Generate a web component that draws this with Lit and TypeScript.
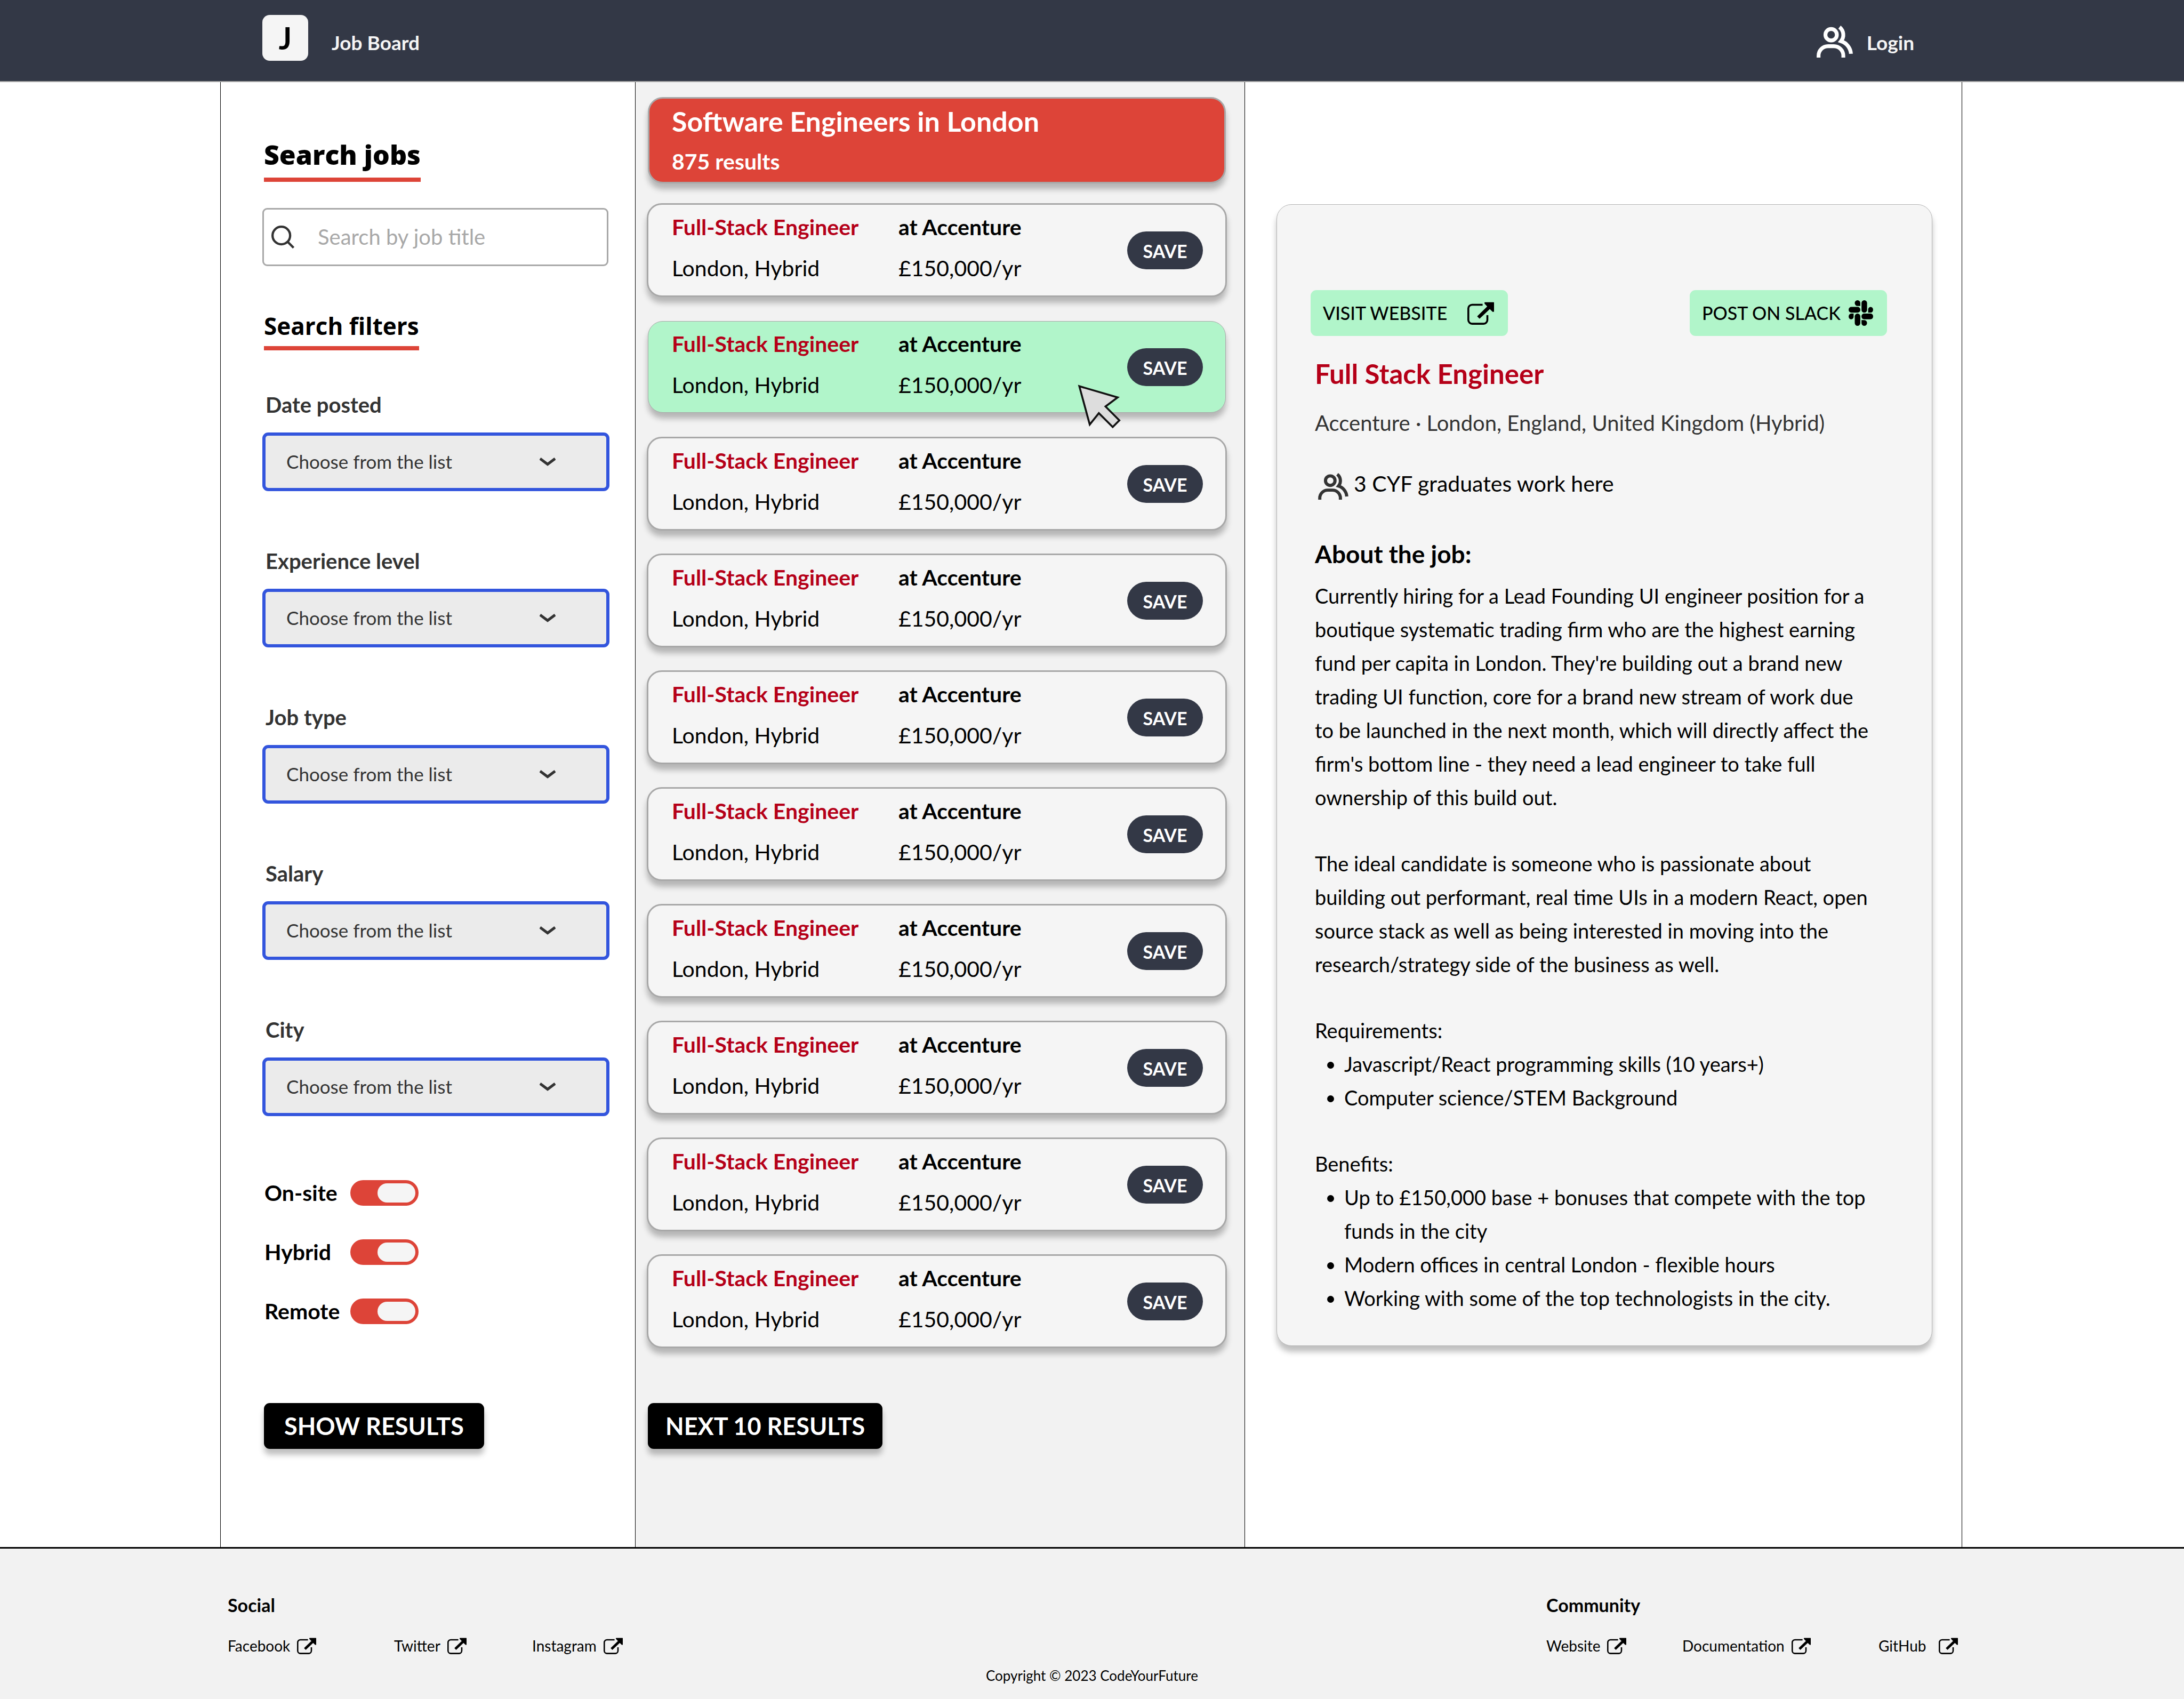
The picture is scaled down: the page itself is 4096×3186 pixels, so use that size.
import { LitElement, html, css, svg } from "lit";
import { customElement, property, state } from "lit/decorators.js";
import { classMap } from "lit/directives/class-map.js";

const peopleIcon = html`<svg class="people" viewBox="0 0 95 84" fill="none" stroke="currentColor" stroke-width="10" aria-hidden="true">
  <circle cx="38" cy="24" r="15" />
  <path d="M5 84V79A25 25 0 0 1 30 54H45A25 25 0 0 1 70 79V84" />
  <path d="M60 4A26 26 0 0 1 64 41A37 37 0 0 1 90 74" />
</svg>`;

const externalIcon = html`<svg class="external" viewBox="0 0 70 60" aria-hidden="true">
  <path d="M40 7.5H12.5A10 10 0 0 0 2.5 17.5V47.5A10 10 0 0 0 12.5 57.5H42.5A10 10 0 0 0 52.5 47.5V35" fill="none" stroke="currentColor" stroke-width="5" />
  <path d="M46 2H69V25L66.500 25L59 17.500L32 43L27 38L53.500 12L46 4Z" fill="currentColor" stroke="currentColor" stroke-width="2" stroke-linejoin="round" />
</svg>`;

const slackIcon = html`<svg class="slack" viewBox="0 0 64 67" fill="currentColor" aria-hidden="true">
  <rect x="0" y="17.500" width="30.500" height="15" rx="7" />
  <rect x="33.700" y="0" width="14.500" height="32.500" rx="7.200" />
  <rect x="33.700" y="35" width="30.300" height="15" rx="7" />
  <rect x="16" y="35" width="14.500" height="32" rx="7.200" />
  <path d="M30.500 15H23.200A7.300 7.500 0 1 1 30.500 7.500Z" />
  <path d="M51 32.500V25A6.500 7.500 0 1 1 57.500 32.500Z" />
  <path d="M13 35V42.500A6.500 7.500 0 1 1 6.500 35Z" />
  <path d="M33.700 52H41A7.200 7.500 0 1 1 33.700 59.500Z" />
</svg>`;

const base = css`
  * {
    box-sizing: border-box;
    margin: 0;
  }
  :host {
    display: block;
    font-family: Lato, "Open Sans", sans-serif;
    font-size: 41px;
    line-height: 48px;
    color: #000;
  }
  button,
  input,
  select {
    font: inherit;
    color: inherit;
  }
  a {
    color: inherit;
    text-decoration: none;
  }
  svg {
    display: block;
    flex: none;
  }
  .external {
    width: 50px;
    height: 43px;
  }
`;

const blackButton = css`
  .primary {
    height: 86px;
    border: 0;
    border-radius: 11px;
    background: #000;
    color: #fff;
    font-size: 45px;
    font-weight: 700;
    line-height: 56px;
    box-shadow: 0 11px 11px rgba(0, 0, 0, 0.25);
  }
`;

@customElement("site-header")
class SiteHeader extends LitElement {
  static styles = [
    base,
    css`
      .bar {
        display: grid;
        grid-template-columns: 413fr 3267fr 416fr;
        height: 154px;
        background: #333846;
        border-bottom: 2px solid #a8a8a8;
        color: #f5f5f5;
        font-size: 37px;
        font-weight: 700;
      }
      .inner {
        grid-column: 2;
        display: flex;
        justify-content: space-between;
        align-items: flex-start;
        padding: 28px 90px 0 79px;
      }
      .brand,
      .login {
        display: flex;
      }
      .brand {
        gap: 44px;
      }
      .logo {
        width: 86px;
        height: 86px;
        border-radius: 14px;
        background: #f5f5f5;
        color: #000;
        font-size: 57px;
        line-height: 86px;
        text-align: center;
      }
      .name {
        padding-top: 28px;
      }
      .login {
        gap: 26px;
        padding-top: 20px;
      }
      .login span {
        padding-top: 8px;
      }
      .people {
        width: 68px;
        height: 60px;
        color: #fff;
      }
    `,
  ];
  render() {
    return html`<header class="bar">
      <div class="inner">
        <a class="brand" href="#"><span class="logo">J</span><span class="name">Job Board</span></a>
        <a class="login" href="#login">${peopleIcon}<span>Login</span></a>
      </div>
    </header>`;
  }
}

@customElement("search-panel")
class SearchPanel extends LitElement {
  @state() private modes = ["On-site", "Hybrid", "Remote"];
  @state() private filters = ["Date posted", "Experience level", "Job type", "Salary", "City"];
  static styles = [
    base,
    blackButton,
    css`
      :host {
        padding: 106px 48px 0 78px;
      }
      form {
        display: flex;
        flex-direction: column;
        align-items: stretch;
      }
      h1,
      h2 {
        align-self: flex-start;
        margin-left: 3px;
        border-bottom: 8px solid #dd4438;
        font-family: "Open Sans", Lato, sans-serif;
      }
      h1 {
        padding-bottom: 13px;
        font-size: 50px;
        font-weight: 800;
        line-height: 60px;
      }
      h2 {
        margin-top: 84px;
        padding-bottom: 10px;
        font-size: 44px;
        font-weight: 700;
        line-height: 56px;
      }
      .search {
        display: flex;
        align-items: center;
        height: 109px;
        margin: 49px 2px 0 0;
        padding-left: 14px;
        gap: 44px;
        border: 3px solid #a8a8a8;
        border-radius: 9px;
        color: #333;
        font-size: 40px;
      }
      .search svg {
        width: 43px;
        height: 43px;
      }
      .search input {
        flex: 1;
        min-width: 0;
        padding: 0 0 2px;
        border: 0;
        background: none;
        outline: 0;
      }
      .search input::placeholder {
        color: #a8a8a8;
        opacity: 1;
      }
      .filters {
        display: flex;
        flex-direction: column;
        gap: 106px;
        margin-top: 77px;
      }
      .filter {
        display: grid;
        gap: 27px;
        color: #333;
      }
      .filter label {
        padding-left: 6px;
        font-size: 40px;
        font-weight: 700;
        line-height: 50px;
      }
      .pick {
        display: grid;
        align-items: center;
      }
      .pick select {
        grid-area: 1 / 1;
        width: 100%;
        height: 110px;
        padding: 0 0 2px 39px;
        appearance: none;
        border: 6px solid #3355dd;
        border-radius: 11px;
        background: #ebebeb;
        font-size: 35px;
      }
      .pick svg {
        grid-area: 1 / 1;
        justify-self: end;
        width: 30px;
        height: 16px;
        margin-right: 101px;
        pointer-events: none;
      }
      .modes {
        display: grid;
        gap: 63px;
        margin-top: 120px;
      }
      .mode {
        display: grid;
        grid-template-columns: 161px auto;
        justify-content: start;
        padding-left: 4px;
        font-weight: 700;
      }
      .mode input {
        display: flex;
        justify-content: flex-end;
        width: 128px;
        height: 48px;
        margin: 0;
        padding: 6px;
        appearance: none;
        border-radius: 24px;
        background: #dd4438;
      }
      .mode input::before {
        content: "";
        width: 71px;
        border-radius: 18px;
        background: #f5f5f5;
      }
      .mode input:not(:checked) {
        justify-content: flex-start;
        background: #a8a8a8;
      }
      .primary {
        align-self: flex-start;
        margin: 148px 0 0 3px;
        padding: 0 38px;
      }
    `,
  ];
  render() {
    return html`<form @submit=${(e: Event) => e.preventDefault()}>
      <h1>Search jobs</h1>
      <div class="search">
        <svg viewBox="0 0 60 60" fill="none" stroke="currentColor" stroke-width="6" aria-hidden="true">
          <circle cx="26" cy="26" r="23" />
          <path d="M43 43L58 58" />
        </svg>
        <input type="search" placeholder="Search by job title" aria-label="Search by job title" />
      </div>
      <h2>Search filters</h2>
      <div class="filters">
        ${this.filters.map(
          (name, i) => html`<div class="filter">
            <label for="filter-${i}">${name}</label>
            <div class="pick">
              <select id="filter-${i}">
                <option>Choose from the list</option>
              </select>
              <svg viewBox="0 0 30 16" fill="none" stroke="currentColor" stroke-width="5" aria-hidden="true">
                <path d="M1 2L15 12.500L29 2" />
              </svg>
            </div>
          </div>`
        )}
      </div>
      <div class="modes">
        ${this.modes.map(
          (name, i) => html`<div class="mode">
            <label for="mode-${i}">${name}</label>
            <input id="mode-${i}" type="checkbox" role="switch" checked />
          </div>`
        )}
      </div>
      <button class="primary">SHOW RESULTS</button>
    </form>`;
  }
}

@customElement("job-results")
class JobResults extends LitElement {
  @property({ type: Number }) active = 1;
  static styles = [
    base,
    blackButton,
    css`
      :host {
        padding: 28px 33px 0 21px;
      }
      .banner,
      .card {
        border: 3px solid #a8a8a8;
        border-radius: 28px;
        box-shadow: 0 11px 11px rgba(0, 0, 0, 0.25);
      }
      .banner {
        height: 162px;
        margin: 0 2px;
        padding: 12px 42px 0;
        background: #dd4438;
        color: #fff;
        font-weight: 700;
      }
      h2 {
        margin-bottom: 22px;
        font-size: 52px;
        font-weight: 700;
        line-height: 60px;
      }
      ul {
        display: grid;
        gap: 43px;
        margin-top: 37px;
        padding: 0;
        list-style: none;
      }
      .card {
        position: relative;
        display: flex;
        justify-content: space-between;
        align-items: center;
        height: 176px;
        padding: 0 42px 0 44px;
        background: #f5f5f5;
      }
      .card.active {
        height: 172px;
        margin: 2px;
        border-width: 1px;
        background: #b1f5ca;
      }
      .facts {
        display: grid;
        grid-template-columns: 425px auto;
        row-gap: 29px;
        padding-bottom: 10px;
      }
      h3 {
        color: #b50018;
        font: inherit;
        font-weight: 700;
      }
      .company {
        font-weight: 700;
      }
      .save {
        width: 142px;
        height: 71px;
        padding: 4px 0 0;
        border: 0;
        border-radius: 36px;
        background: #333846;
        color: #fff;
        font-size: 34px;
        font-weight: 700;
      }
      .cursor {
        position: absolute;
        right: 193px;
        bottom: -32px;
        width: 84px;
        height: 84px;
      }
      .primary {
        margin: 103px 0 0 2px;
        padding: 0 33px;
      }
    `,
  ];
  render() {
    const cursor = svg`<svg class="cursor" viewBox="0 0 118 118" fill="#ddd" stroke="#111" stroke-width="5" aria-hidden="true">
      <path d="M4.500 4.500L105.500 34L73.500 58L110 94.500L92.500 112L56 75.500L32 105.500Z" />
    </svg>`;
    return html`<section>
      <div class="banner">
        <h2>Software Engineers in London</h2>
        <p>875 results</p>
      </div>
      <ul>
        ${Array.from({ length: 10 }, (_, i) => {
          const active = i === this.active;
          return html`<li class=${classMap({ card: true, active })}>
            <div class="facts">
              <h3>Full-Stack Engineer</h3>
              <p class="company">at Accenture</p>
              <p>London, Hybrid</p>
              <p>£150,000/yr</p>
            </div>
            <button class="save">SAVE</button>
            ${active ? cursor : ""}
          </li>`;
        })}
      </ul>
      <button class="primary">NEXT 10 RESULTS</button>
    </section>`;
  }
}

@customElement("job-detail")
class JobDetail extends LitElement {
  static styles = [
    base,
    css`
      :host {
        padding: 229px 55px 0 59px;
      }
      article {
        padding: 160px 84px 57px 63px;
        border: 1px solid #b4b4b4;
        border-radius: 28px;
        background: #f5f5f5;
        box-shadow: 0 11px 11px rgba(0, 0, 0, 0.25);
      }
      .actions {
        display: flex;
        justify-content: space-between;
      }
      .actions button {
        display: flex;
        justify-content: space-between;
        align-items: center;
        width: 370px;
        height: 86px;
        padding: 0 26px 0 23px;
        border: 0;
        border-radius: 11px;
        background: #b1f5ca;
        font-size: 34px;
        font-weight: 500;
      }
      .slack {
        width: 46px;
        height: 48px;
      }
      .text {
        padding: 41px 30px 0 8px;
      }
      h2 {
        color: #b50018;
        font-size: 51px;
        font-weight: 700;
        line-height: 60px;
      }
      .place {
        margin-top: 37px;
        color: #333;
        font-size: 40px;
        line-height: 50px;
      }
      .grads {
        display: flex;
        gap: 10px;
        height: 56px;
        margin-top: 63px;
        padding-left: 6px;
        line-height: 52px;
      }
      .people {
        align-self: flex-end;
        width: 57px;
        height: 50px;
        color: #333;
      }
      h3 {
        margin: 74px 0 19px;
        font-size: 46px;
        font-weight: 700;
        line-height: 56px;
      }
      .body {
        display: grid;
        gap: 61px;
        font-size: 38px;
        line-height: 63px;
      }
      ul {
        padding-left: 55px;
      }
    `,
  ];
  render() {
    return html`<article>
      <div class="actions">
        <button>VISIT WEBSITE ${externalIcon}</button>
        <button>POST ON SLACK ${slackIcon}</button>
      </div>
      <div class="text">
        <h2>Full Stack Engineer</h2>
        <p class="place">Accenture · London, England, United Kingdom (Hybrid)</p>
        <div class="grads">${peopleIcon}<p>3 CYF graduates work here</p></div>
        <h3>About the job:</h3>
        <div class="body">
          <p>
            Currently hiring for a Lead Founding UI engineer position for a boutique systematic trading firm who are the
            highest earning fund per capita in London. They're building out a brand new trading UI function, core for a
            brand new stream of work due to be launched in the next month, which will directly affect the firm's bottom
            line - they need a lead engineer to take full ownership of this build out.
          </p>
          <p>
            The ideal candidate is someone who is passionate about building out performant, real time UIs in a modern
            React, open source stack as well as being interested in moving into the research/strategy side of the
            business as well.
          </p>
          <div>
            <p>Requirements:</p>
            <ul>
              <li>Javascript/React programming skills (10 years+)</li>
              <li>Computer science/STEM Background</li>
            </ul>
          </div>
          <div>
            <p>Benefits:</p>
            <ul>
              <li>Up to £150,000 base + bonuses that compete with the top funds in the city</li>
              <li>Modern offices in central London - flexible hours</li>
              <li>Working with some of the top technologists in the city.</li>
            </ul>
          </div>
        </div>
      </div>
    </article>`;
  }
}

@customElement("site-footer")
class SiteFooter extends LitElement {
  static styles = [
    base,
    css`
      footer {
        display: grid;
        grid-template-columns: 413fr 3267fr 416fr;
        padding: 86px 0 26px;
        border-top: 3px solid #000;
        background: #f2f2f2;
        font-size: 28px;
        line-height: 36px;
      }
      .groups {
        grid-column: 2;
        display: flex;
        justify-content: space-between;
        padding: 0 8px 0 14px;
      }
      h2 {
        margin-bottom: 38px;
        font-size: 34px;
        font-weight: 700;
        line-height: 40px;
      }
      nav {
        display: grid;
        grid-template-columns: 312px 259px auto;
      }
      nav a {
        display: flex;
        gap: 13px;
        align-items: center;
      }
      nav.community {
        grid-template-columns: 255px 368px 149px;
      }
      nav.community a:last-child {
        justify-content: space-between;
      }
      .external {
        width: 36px;
        height: 31px;
      }
      .copyright {
        grid-column: 1 / -1;
        margin-top: 20px;
        font-size: 26px;
        text-align: center;
      }
    `,
  ];
  private links(names: string[]) {
    return names.map((n) => html`<a href="#${n.toLowerCase()}"><span>${n}</span>${externalIcon}</a>`);
  }
  render() {
    return html`<footer>
      <div class="groups">
        <section>
          <h2>Social</h2>
          <nav aria-label="Social">${this.links(["Facebook", "Twitter", "Instagram"])}</nav>
        </section>
        <section>
          <h2>Community</h2>
          <nav class="community" aria-label="Community">${this.links(["Website", "Documentation", "GitHub"])}</nav>
        </section>
      </div>
      <p class="copyright">Copyright © 2023 CodeYourFuture</p>
    </footer>`;
  }
}

@customElement("app-root")
class AppRoot extends LitElement {
  static styles = css`
    :host {
      display: flex;
      flex-direction: column;
      min-height: 100vh;
      background: #fff;
    }
    main {
      flex: 1;
      display: grid;
      grid-template-columns: 413fr 778fr 1144fr 1345fr 416fr;
    }
    .search {
      grid-column: 2;
      border-left: 1px solid #000;
    }
    .results {
      border: solid #000;
      border-width: 0 1px;
      background: #f2f2f2;
    }
    .detail {
      border-right: 1px solid #000;
    }
  `;
  render() {
    return html`
      <site-header></site-header>
      <main>
        <search-panel class="search"></search-panel>
        <job-results class="results"></job-results>
        <job-detail class="detail"></job-detail>
      </main>
      <site-footer></site-footer>
    `;
  }
}
